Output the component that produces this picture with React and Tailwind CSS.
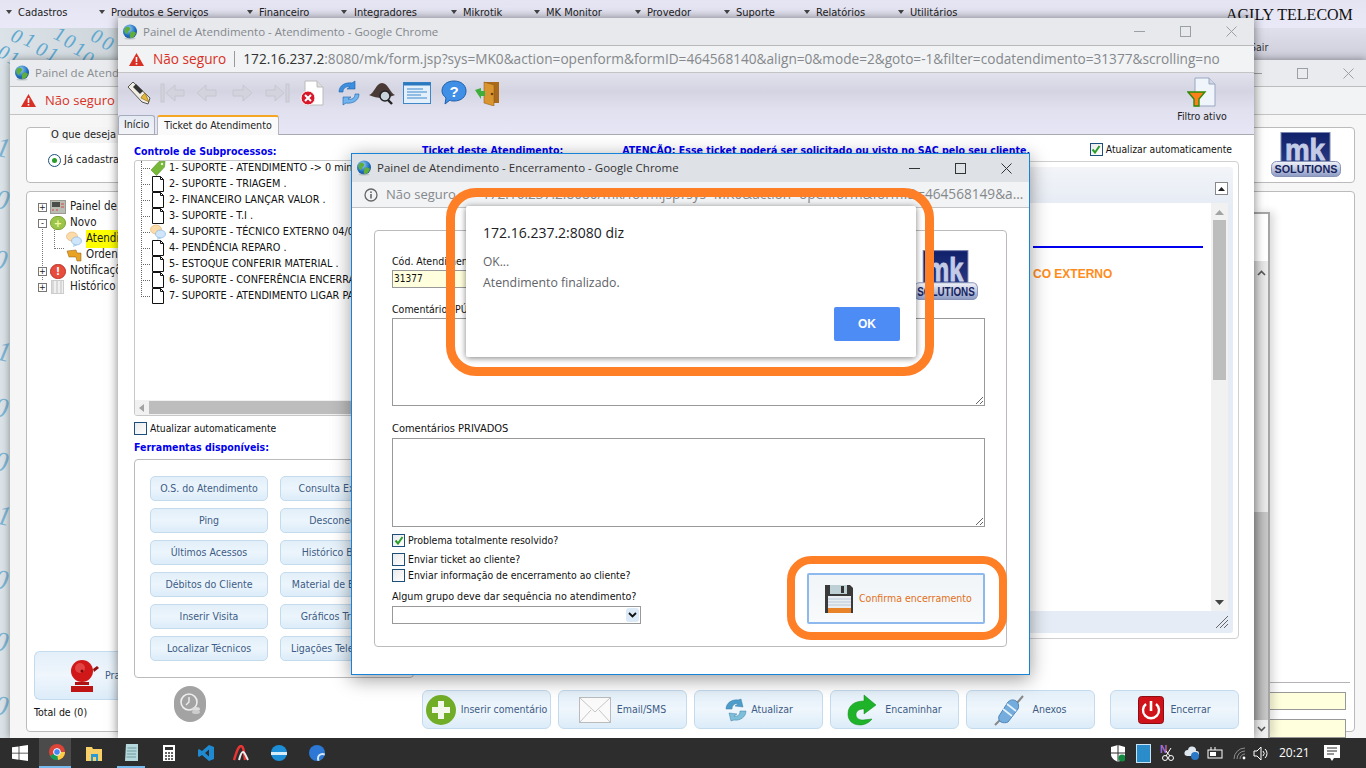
import React from 'react';

const menus = [
  ['Cadastros', 6, 18], ['Produtos e Serviços', 99, 111], ['Financeiro', 247, 259], ['Integradores', 341, 354],
  ['Mikrotik', 451, 463], ['MK Monitor', 534, 546], ['Provedor', 635, 647], ['Suporte', 724, 736], ['Relatórios', 804, 816], ['Utilitários', 898, 910],
];

const subprocessos = [
  ['tag', '1- SUPORTE - ATENDIMENTO -> 0 minutos'],
  ['doc', '2- SUPORTE - TRIAGEM .'],
  ['doc', '2- FINANCEIRO LANÇAR VALOR .'],
  ['doc', '3- SUPORTE - T.I .'],
  ['chat', '4- SUPORTE - TÉCNICO EXTERNO 04/05'],
  ['doc', '4- PENDÊNCIA REPARO .'],
  ['doc', '5- ESTOQUE CONFERIR MATERIAL .'],
  ['doc', '6- SUPORTE - CONFERÊNCIA ENCERRAMENTO'],
  ['doc', '7- SUPORTE - ATENDIMENTO LIGAR PARA'],
];

const ferramentas = [
  ['O.S. do Atendimento', 'Consulta Externa'],
  ['Ping', 'Desconectar'],
  ['Últimos Acessos', 'Histórico Banda'],
  ['Débitos do Cliente', 'Material de Estoque'],
  ['Inserir Visita', 'Gráficos Tráfego'],
  ['Localizar Técnicos', 'Ligações Telefônicas'],
];

function Globe({ size = 16 }) {
  return (
    <svg width={size} height={size} viewBox="0 0 16 16" className="shrink-0">
      <defs>
        <radialGradient id="gl" cx="0.4" cy="0.3" r="0.8">
          <stop offset="0" stopColor="#9fd4f7" />
          <stop offset="0.6" stopColor="#1f6fc0" />
          <stop offset="1" stopColor="#0f3f86" />
        </radialGradient>
      </defs>
      <circle cx="8" cy="7.5" r="7" fill="url(#gl)" />
      <path d="M3 4c2-2 4-1 5 0s-1 3-2 4-1 3-2 2-2-4-1-6zM9 8c2-1 4 0 5 1-1 3-3 5-5 5s-1-5 0-6z" fill="#5fae3a" />
      <ellipse cx="8" cy="14.6" rx="5.5" ry="1" fill="#9aa" opacity="0.5" />
    </svg>
  );
}

function Warn({ className = '' }) {
  return (
    <svg width="15" height="13" viewBox="0 0 15 13" className={`shrink-0 ${className}`}>
      <path d="M7.5 0L15 13H0z" fill="#d93025" />
      <rect x="6.7" y="4" width="1.6" height="5" fill="#fff" />
      <rect x="6.7" y="10" width="1.6" height="1.6" fill="#fff" />
    </svg>
  );
}

function WinControls({ color = '#9aa0a6', close = '#9aa0a6', className = 'pr-[17px]' }) {
  return (
    <div className={`flex items-center gap-[35px] ${className}`}>
      <svg width="11" height="11" viewBox="0 0 11 11"><path d="M0 5.500h11" stroke={color} /></svg>
      <svg width="11" height="11" viewBox="0 0 11 11"><rect x="0.5" y="0.5" width="10" height="10" fill="none" stroke={color} /></svg>
      <svg width="11" height="11" viewBox="0 0 11 11"><path d="M0.5 0.5l10 10M10.500 0.5l-10 10" stroke={close} /></svg>
    </div>
  );
}

function DocIcon() {
  return (
    <svg width="14" height="16" viewBox="0 0 14 16" className="shrink-0">
      <path d="M1.500 0.5h8l3 3v12h-11z" fill="#fff" stroke="#111" />
      <path d="M9.500 0.5v3h3" fill="none" stroke="#111" />
    </svg>
  );
}

function TagIcon() {
  return (
    <svg width="16" height="16" viewBox="0 0 16 16" className="shrink-0">
      <path d="M1 10L9 1.500l6-.5-.5 6L6.500 15.500z" fill="#77b83a" stroke="#5b9528" strokeWidth="0.6" />
      <circle cx="12" cy="4" r="1.200" fill="#e8f5d8" />
    </svg>
  );
}

function ChatIcon({ size = 16 }) {
  return (
    <svg width={size} height={size} viewBox="0 0 16 16" className="shrink-0">
      <ellipse cx="6" cy="5.500" rx="5.500" ry="4.500" fill="#fbdca8" stroke="#e0b070" strokeWidth="0.6" />
      <ellipse cx="10.500" cy="10" rx="5" ry="4" fill="#cfe6fa" stroke="#79aedb" strokeWidth="0.6" />
      <path d="M8 13l-0.5 2.500 3-1.500z" fill="#cfe6fa" stroke="#79aedb" strokeWidth="0.4" />
    </svg>
  );
}

function ToolArrow({ dir, bar, className = '' }) {
  return (
    <svg width="26" height="22" viewBox="0 0 26 22" className={`shrink-0 ${className}`}>
      <g transform={dir === 'right' ? 'translate(26,0) scale(-1,1)' : undefined} fill="#d2d3dc" stroke="#c3c4cd" strokeWidth="0.8">
        {bar && <rect x="1" y="2" width="3" height="18" />}
        <path d={bar ? 'M6 11L15 3v5h9v6h-9v5z' : 'M3 11L12 3v5h10v6H12v5z'} />
      </g>
    </svg>
  );
}

function Checkbox({ checked }) {
  return (
    <span className="w-[13px] h-[13px] shrink-0 border border-[#1c4f7c] bg-gradient-to-br from-[#eaeaea] to-white flex items-center justify-center">
      {checked && (
        <svg width="10" height="9" viewBox="0 0 10 9"><path d="M1.500 4.500L4 7.500 8.500 1" fill="none" stroke="#2a9d2a" strokeWidth="2" /></svg>
      )}
    </span>
  );
}

function ToolButton({ children, className = '' }) {
  return (
    <button className={`h-[25px] shrink-0 rounded-[5px] border border-[#c4dbee] bg-[linear-gradient(#e2eff9,#ecf5fc_50%,#dcecf9)] text-[10.5px] text-[#3d5c86] text-center whitespace-nowrap overflow-hidden ${className}`}>
      {children}
    </button>
  );
}

function ActionButton({ icon, label, className = '', gap = 'gap-[6px]' }) {
  return (
    <button className={`w-[129px] h-[39px] shrink-0 rounded-[6px] border border-[#c4dbee] bg-[linear-gradient(#e3eff9,#eff6fc_50%,#dcecf9)] flex items-center justify-center ${gap} text-[10.5px] text-[#3d5c86] whitespace-nowrap ${className}`}>
      {icon}
      <span>{label}</span>
    </button>
  );
}

function Logo({ className = '', width = 70, height = 45 }) {
  return (
    <svg width={width} height={height} viewBox="0 0 70 45" preserveAspectRatio="none" className={className}>
      <defs>
        <linearGradient id="lg1" x1="0" y1="0" x2="0" y2="1">
          <stop offset="0" stopColor="#10206a" />
          <stop offset="1" stopColor="#2a3d85" />
        </linearGradient>
        <linearGradient id="lg2" x1="0" y1="0" x2="0" y2="1">
          <stop offset="0" stopColor="#f3f4fa" />
          <stop offset="1" stopColor="#8b99c4" />
        </linearGradient>
      </defs>
      <rect x="10" y="0.5" width="49" height="33" fill="url(#lg1)" stroke="#7d86ae" />
      <text x="34" y="28" textAnchor="middle" fontFamily="'Liberation Sans',sans-serif" fontWeight="700" fontSize="30" fill="#c4cbe6" stroke="#c4cbe6" strokeWidth="0.9" textLength="40" lengthAdjust="spacingAndGlyphs">mk</text>
      <rect x="0.5" y="29.500" width="69" height="15" rx="5" fill="url(#lg2)" stroke="#8893b8" />
      <text x="35" y="41" textAnchor="middle" fontFamily="'Liberation Sans',sans-serif" fontWeight="700" fontSize="11" fill="#16245e" textLength="63" lengthAdjust="spacingAndGlyphs">SOLUTIONS</text>
    </svg>
  );
}

function Wallpaper() {
  // digitos da faixa de cima (centro x, y) e da coluna esquerda
  const top = [
    ['0', 17, 36], ['1', 30, 40], ['0', 42, 49], ['1', 53, 54],
    ['1', 60, 34], ['0', 70, 41], ['1', 80, 49], ['0', 88, 58],
    ['0', 97, 36], ['0', 108, 43],
    ['0', 4, 52], ['1', 14, 58],
  ];
  const column = [
    ['1', 3, 148], ['0', 2, 200], ['0', 0, 260], ['1', 4, 352], ['0', 1, 408], ['0', 1, 462],
    ['1', 4, 516], ['0', 1, 580], ['0', 1, 642], ['0', 1, 706],
  ];
  return (
    <div className="absolute left-0 top-[28px] w-[120px] h-[712px] overflow-hidden bg-[linear-gradient(90deg,#dbe3e8,#cdd5da)] font-['Liberation_Serif',serif] italic text-[#5fa8d0]">
      {top.map(([d, x, y], i) => (
        <span key={i} className="absolute rotate-[24deg] text-[20px] leading-none" style={{ left: x - 5, top: y - 38 }}>{d}</span>
      ))}
      {column.map(([d, x, y], i) => (
        <span key={i} className="absolute rotate-[12deg] text-[28px] leading-none text-[#7db4d4]" style={{ left: x - 7, top: y - 42 }}>{d}</span>
      ))}
    </div>
  );
}

function BackTree() {
  const plus = (
    <span className="w-[9px] h-[9px] border border-[#777] bg-white flex items-center justify-center text-[9px] leading-none shrink-0">+</span>
  );
  return (
    <div className="relative flex flex-col text-[11.5px] text-[#222]">
      <span className="absolute left-[4px] top-[20px] h-[61px] border-l border-dotted border-[#777]" />
      <span className="absolute left-[16px] top-[24px] h-[26px] w-[10px] border-l border-b border-dotted border-[#777]" />
      <div className="relative h-[16px] flex items-center gap-[3px]">{plus}
        <svg width="16" height="14" viewBox="0 0 16 14" className="shrink-0">
          <rect x="0.5" y="0.5" width="15" height="13" fill="#b9bcb2" stroke="#9a9a92" />
          <rect x="2" y="2" width="8" height="5" fill="#4a4d48" />
          <path d="M2 10h2M6 10h2M11 4h3M11 7h3" stroke="#d44" />
        </svg>
        <span className="ml-[1px] whitespace-nowrap">Painel de</span>
      </div>
      <div className="relative h-[16px] flex items-center gap-[3px]">
        <span className="w-[9px] h-[9px] border border-[#777] bg-white flex items-center justify-center text-[9px] leading-none shrink-0">-</span>
        <span className="w-[16px] h-[14px] rounded-full bg-[#9bc44a] border border-[#7da133] flex items-center justify-center text-[11px] font-bold text-[#f3f7a0] leading-none shrink-0">+</span>
        <span className="ml-[1px]">Novo</span>
      </div>
      <div className="relative h-[16px] flex items-center gap-[3px] pl-[28px]">
        <ChatIcon />
        <span className="bg-[#ffff00] ml-[1px] whitespace-nowrap">Atendi</span>
      </div>
      <div className="relative h-[16px] flex items-center gap-[4px] pl-[28px]">
        <svg width="16" height="16" viewBox="0 0 16 16" className="shrink-0"><path d="M1 4l9-1 1 3 4 0 0 8h-4l-1-4-7 0z" fill="#e8a224" stroke="#8a5a12" strokeWidth="0.5" /></svg>
        <span>Orden</span>
      </div>
      <div className="relative h-[16px] flex items-center gap-[3px]">{plus}
        <span className="w-[16px] h-[15px] rounded-full bg-[#e84c3d] border border-[#b93226] flex items-center justify-center text-[11px] font-bold text-white leading-none shrink-0">!</span>
        <span className="ml-[1px] whitespace-nowrap">Notificaçõ</span>
      </div>
      <div className="relative h-[16px] flex items-center gap-[3px]">{plus}
        <span className="w-[13px] h-[14px] ml-[1px] mr-[2px] bg-[repeating-linear-gradient(90deg,#d8d8d8_0_2px,#f0f0f0_2px_4px)] border border-[#ccc] shrink-0" />
        <span className="ml-[1px]">Histórico</span>
      </div>
    </div>
  );
}

function BackWindow() {
  return (
    <section className="absolute left-[10px] top-[60px] w-[1356px] h-[678px] flex flex-col bg-[#f6f6f6] shadow-[0_0_8px_rgba(0,0,0,0.4)]">
      <div className="h-[27px] shrink-0 bg-[#e9ebee] border-b border-[#bdbdbd] flex items-center justify-between pl-[2px]">
        <div className="flex items-center gap-[5px] pl-[2px] text-[11.5px] text-[#8a8d91] font-['Open_Sans',sans-serif]">
          <Globe />
          <span>Painel de Atendimento</span>
        </div>
        <WinControls className="pr-[12px]" />
      </div>
      <div className="h-[28px] shrink-0 bg-[#f1f3f4] border-b border-[#c4c4c4] flex items-center pl-[11px] gap-[9px] text-[13.5px] text-[#d93025]">
        <Warn />
        <span className="font-['Open_Sans',sans-serif] text-[13px]">Não seguro</span>
      </div>
      <div className="flex-1 flex flex-col pl-[16px] pr-[11px] pt-[12px] pb-[6px] gap-[8px] min-h-0">
        <div className="h-[56px] shrink-0 rounded-[4px] border border-[#bdbabd] bg-white relative flex items-center justify-between pl-[21px] pr-[13px]">
          <span className="absolute left-[23px] -top-[1px] h-[16px] px-[1px] bg-[#f4f4f4] text-[11px] text-[#222] leading-[16px]">O que deseja fazer</span>
          <div className="flex items-center gap-[3px] pt-[10px] text-[11px] text-[#222]">
            <span className="w-[13px] h-[13px] rounded-full border border-[#1c4f7c] bg-white flex items-center justify-center">
              <span className="w-[5px] h-[5px] rounded-full bg-[#2a9d2a]" />
            </span>
            <span>Já cadastrado</span>
          </div>
          <Logo className="mt-[-2px]" />
        </div>
        <div className="flex-1 min-h-0 rounded-[4px] border border-[#bdbabd] bg-white flex">
          <div className="w-[92px] flex flex-col pl-[11px] pt-[7px] text-[11px] text-[#222]">
            <BackTree />
            <div className="mt-auto pb-[12px] flex flex-col ml-[-4px]">
              <div className="h-[49px] rounded-l-[6px] border border-r-0 border-[#c4dbee] bg-[linear-gradient(#e3eff9,#eff6fc_50%,#dcecf9)] flex items-center justify-end gap-[6px] text-[#3d5c86]">
                <svg width="30" height="34" viewBox="0 0 30 34" className="shrink-0">
                  <circle cx="13" cy="12" r="11" fill="#d01818" />
                  <circle cx="11" cy="9" r="5" fill="#f06060" opacity="0.6" />
                  <circle cx="13" cy="12" r="1.500" fill="#7a0808" />
                  <rect x="6" y="23" width="14" height="3" fill="#b01212" />
                  <rect x="2" y="27" width="22" height="6" fill="#c01414" />
                  <path d="M24 10l4-3 2 2-5 4z" fill="#901010" />
                </svg>
                <span className="w-[14px] overflow-hidden text-[10.5px]">Pra</span>
              </div>
              <span className="mt-[5px] h-[14px] leading-[14px] text-[10.5px] text-[#111]">Total de (0)</span>
            </div>
          </div>
          <div className="flex-1" />
          <div className="w-[86px] flex flex-col">
            <div className="flex-1" />
            <div className="border-t border-[#b7b2b7] pt-[9px] pr-[4px] flex flex-col gap-[9px] mr-[4px] h-[49px]">
              <div className="h-[18px] shrink-0 border border-[#999] bg-[#ffffdd]" />
              <div className="h-[19px] shrink-0 border border-[#999] bg-[#ffffdd]" />
            </div>
          </div>
        </div>
      </div>
      {/* coluna de rolagem da janela de trás */}
      <div className="absolute left-[1244px] top-[152px] w-[16px] h-[526px] border-r-2 border-[#a5a5a5] border-t-2 flex flex-col bg-white shadow-[4px_0_8px_rgba(0,0,0,0.15)]">
        <div className="h-[47px] shrink-0 bg-white" />
        <div className="flex-1 min-h-0 bg-[linear-gradient(90deg,#d4d4d4,#ececec)] flex flex-col items-center">
          <svg width="9" height="6" viewBox="0 0 9 6" className="mt-[9px]"><path d="M1 5l3.500-3.500L8 5" fill="none" stroke="#555" strokeWidth="1.6" /></svg>
          <span className="mt-auto w-full h-[208px] bg-[linear-gradient(90deg,#ababab,#c9c9c9)]" />
          <span className="w-full h-[18px] bg-[#efefef] flex items-center justify-center">
            <svg width="9" height="6" viewBox="0 0 9 6"><path d="M1 1l3.500 3.500L8 1" fill="none" stroke="#555" strokeWidth="1.6" /></svg>
          </span>
        </div>
      </div>
    </section>
  );
}

function MainToolbar() {
  return (
    <div className="h-[62px] shrink-0 relative bg-[linear-gradient(#e2e2ee,#d4d4e2_30%,#e0e0ef_60%,#e6e6f6)] border-b border-[#a9a9b1]">
      <div className="flex items-center pl-[9px] pt-[7px]">
        <svg width="24" height="24" viewBox="0 0 24 24" className="shrink-0">
          <path d="M1 6l5-5 17 16-2 6-6-2z" fill="#f1efe4" stroke="#555" />
          <path d="M6 6l3-3 7 7-3 3z" fill="#333" />
          <path d="M15 15l3-3 4 9-8-4z" fill="#e5b73a" stroke="#7a5a10" strokeWidth="0.6" />
        </svg>
        <ToolArrow dir="left" bar className="ml-[9px]" />
        <ToolArrow dir="left" className="ml-[8px]" />
        <ToolArrow dir="right" className="ml-[9px]" />
        <ToolArrow dir="right" bar className="ml-[9px]" />
        <svg width="24" height="26" viewBox="0 0 24 26" className="shrink-0 ml-[10px]">
          <path d="M5 1h12l6 6v18H5z" fill="#fff" stroke="#bbb" />
          <path d="M17 1v6h6" fill="#ddd" stroke="#bbb" />
          <circle cx="8" cy="18" r="7" fill="#d8182a" stroke="#fff" />
          <path d="M5 15l6 6M11 15l-6 6" stroke="#fff" strokeWidth="2" />
        </svg>
        <svg width="26" height="26" viewBox="0 0 26 26" className="shrink-0 ml-[12px]">
          <path d="M3 12C3 5 10 2 16 3l3-2v8h-8l3-2c-4-1-7 1-7 5z" fill="#3a8fe0" stroke="#1b5fa8" strokeWidth="0.6" />
          <path d="M23 14c0 7-7 10-13 9l-3 2v-8h8l-3 2c4 1 7-1 7-5z" fill="#6fb4ef" stroke="#1b5fa8" strokeWidth="0.6" />
        </svg>
        <svg width="28" height="24" viewBox="0 0 28 24" className="shrink-0 ml-[6px]">
          <path d="M1 14C6 13 8 2 14 2s8 10 13 12c-5 2-9 3-13 3s-9-1-13-3z" fill="#4a3a36" />
          <circle cx="17" cy="15" r="5" fill="#c9d4dc" stroke="#222" strokeWidth="1.500" />
          <path d="M20 19l4 4" stroke="#222" strokeWidth="2.400" />
        </svg>
        <svg width="28" height="24" viewBox="0 0 28 24" className="shrink-0 ml-[7px]">
          <rect x="0.5" y="1.500" width="27" height="21" fill="#e3f0fb" stroke="#3d87c9" />
          <rect x="0.5" y="1.500" width="27" height="3" fill="#2a78c0" />
          <path d="M4 8h16M4 11h20M4 14h14M4 17h20" stroke="#3d87c9" />
        </svg>
        <svg width="26" height="26" viewBox="0 0 26 26" className="shrink-0 ml-[10px]">
          <path d="M13 1c7 0 12 4 12 10s-5 10-12 10c-2 0-3 0-4-1l-5 4 1-6C3 16 1 14 1 11 1 5 6 1 13 1z" fill="#3f8fe6" stroke="#1f5fab" />
          <text x="13" y="17" textAnchor="middle" fontFamily="'Liberation Sans',sans-serif" fontWeight="700" fontSize="15" fill="#fff">?</text>
        </svg>
        <svg width="26" height="26" viewBox="0 0 26 26" className="shrink-0 ml-[7px]">
          <path d="M10 2h15v21H10z" fill="#a96a1c" />
          <path d="M10 2l10 3v21l-10-3z" fill="#d9952f" stroke="#8b5512" strokeWidth="0.5" />
          <circle cx="18" cy="14" r="1.300" fill="#6a400c" />
          <path d="M1 10l6-2 0 3 4 0v5H7v3z" fill="#3fae3a" />
        </svg>
      </div>
      <div className="absolute left-0 bottom-0 flex items-end gap-[2px] text-[10.6px] text-[#222]">
        <div className="h-[19px] px-[5px] rounded-t-[3px] border border-b-0 border-[#a3adbd] bg-[linear-gradient(#e5eaf3,#f3f3f7)] flex items-center">Início</div>
        <div className="h-[20px] px-[6px] rounded-t-[3px] border-x border-[#b7b7bd] border-t-2 border-t-[#f5a623] bg-[#fafafa] flex items-center mb-[-1px]">Ticket do Atendimento</div>
      </div>
      <div className="absolute right-[26px] top-[4px] w-[52px] flex flex-col items-center text-[10.5px] text-[#222]">
        <svg width="30" height="30" viewBox="0 0 30 30">
          <path d="M8 1h14l6 6v22H8z" fill="#f0f4fb" stroke="#9aa7c0" />
          <path d="M22 1v6h6" fill="#cfd6e4" stroke="#9aa7c0" />
          <path d="M1 15h17l-6 7v7h-5v-7z" fill="#ff7f1a" stroke="#2d8a0a" strokeWidth="1.400" />
        </svg>
        <span className="mt-[2px] whitespace-nowrap">Filtro ativo</span>
      </div>
    </div>
  );
}

function MainWindow() {
  return (
    <section className="absolute left-[118px] top-[18px] w-[1136px] h-[720px] flex flex-col bg-white shadow-[0_0_10px_rgba(0,0,0,0.5)]">
      <div className="h-[28px] shrink-0 bg-[#e7e9ec] border-b border-[#b9b9b9] flex items-center justify-between pl-[4px]">
        <div className="flex items-center gap-[5px] text-[11.5px] text-[#85888c] font-['Open_Sans',sans-serif]">
          <Globe />
          <span>Painel de Atendimento - Atendimento - Google Chrome</span>
        </div>
        <WinControls />
      </div>
      <div className="h-[27px] shrink-0 bg-[#f1f3f4] border-b border-[#c4c4c4] flex items-center pl-[11px] font-['Open_Sans',sans-serif] text-[13.65px] whitespace-nowrap overflow-hidden">
        <Warn />
        <span className="ml-[9px] text-[#d93025]">Não seguro</span>
        <span className="mx-[8px] w-px h-[16px] bg-[#999]" />
        <span className="text-[#333]">172.16.237.2</span>
        <span className="text-[#85888c]">:8080/mk/form.jsp?sys=MK0&amp;action=openform&amp;formID=464568140&amp;align=0&amp;mode=2&amp;goto=-1&amp;filter=codatendimento=31377&amp;scrolling=no</span>
      </div>
      <MainToolbar />
      <div className="flex-1 min-h-0 flex flex-col bg-white">
        <div className="h-[542px] shrink-0 flex pl-[16px] pr-[15px]">
          <div className="w-[280px] shrink-0 flex flex-col">
            <h3 className="mt-[9px] h-[14px] leading-[14px] text-[10.5px] font-bold text-[#0000ee]">Controle de Subprocessos:</h3>
            <div className="mt-[2px] h-[256px] shrink-0 border border-[#c8c8c8] rounded-l-[3px] flex flex-col relative overflow-hidden">
              <div className="flex-1 -mt-[1px] text-[10.8px] text-[#111]">
                <span className="absolute left-[6px] top-0 h-[134px] border-l border-dotted border-[#666]" />
                {subprocessos.map(([icon, label]) => (
                  <div key={label} className="h-[16px] flex items-center pl-[6px] whitespace-nowrap">
                    <span className="w-[9px] border-t border-dotted border-[#666] shrink-0" />
                    <span className="w-[16px] flex justify-center shrink-0">
                      {icon === 'tag' && <TagIcon />}
                      {icon === 'doc' && <DocIcon />}
                      {icon === 'chat' && <ChatIcon />}
                    </span>
                    <span className="ml-[3px]">{label}</span>
                  </div>
                ))}
              </div>
              <div className="h-[15px] shrink-0 bg-[#f1f1f1] flex items-center pl-[4px] gap-[5px]">
                <svg width="5" height="8" viewBox="0 0 5 8"><path d="M5 0v8L0 4z" fill="#a3a3a3" /></svg>
                <span className="flex-1 h-[13px] bg-[#bdbdbd]" />
              </div>
            </div>
            <label className="mt-[6px] h-[13px] flex items-center gap-[3px] text-[10.3px] text-[#111]">
              <Checkbox />
              <span>Atualizar automaticamente</span>
            </label>
            <h3 className="mt-[5px] h-[14px] leading-[14px] text-[10.5px] font-bold text-[#0000ee]">Ferramentas disponíveis:</h3>
            <div className="mt-[5px] h-[219px] shrink-0 rounded-[4px] border border-[#bdbabd] pt-[16px] pl-[15px] flex flex-col gap-[7px]">
              {ferramentas.map(([a, b]) => (
                <div key={a} className="flex gap-[12px]">
                  <ToolButton className="w-[118px]">{a}</ToolButton>
                  <ToolButton className="w-[118px]">{b}</ToolButton>
                </div>
              ))}
            </div>
          </div>
          <div className="flex-1 min-w-0 pl-[8px] flex flex-col">
            <div className="mt-[9px] h-[14px] flex items-center text-[10.5px] font-bold text-[#0000ee] whitespace-nowrap">
              <span className="underline">Ticket deste Atendimento:</span>
              <span className="ml-[59px] underline">ATENÇÃO: Esse ticket poderá ser solicitado ou visto no SAC pelo seu cliente.</span>
              <label className="ml-auto -mt-[3px] mr-[7px] flex items-center gap-[3px] text-[10.3px] font-normal text-[#111]">
                <Checkbox checked />
                <span>Atualizar automaticamente</span>
              </label>
            </div>
            <div className="mt-[3px] h-[478px] rounded-[4px] border border-[#d0d0d0] p-[5px] flex flex-col">
              <div className="flex-1 min-h-0 rounded-[3px] bg-[linear-gradient(#f2f4f8,#e6ecf5_40px)] flex flex-col pl-[5px] pr-[5px]">
                <div className="h-[36px] shrink-0 flex items-end justify-end pb-[8px]">
                  <span className="w-[13px] h-[13px] mr-[0px] border border-[#888] bg-white flex items-center justify-center">
                    <svg width="7" height="4" viewBox="0 0 7 4"><path d="M0 4l3.500-4L7 4z" fill="#222" /></svg>
                  </span>
                </div>
                <div className="flex-1 min-h-0 bg-white flex">
                  <div className="flex-1 flex flex-col pt-[43px] pl-[600px] pr-[8px]">
                    <span className="h-[2px] bg-[#0000ee]" />
                    <span className="mt-[17px] text-[12px] font-bold text-[#ff8c1a] font-['Liberation_Sans',sans-serif] whitespace-nowrap">CO EXTERNO</span>
                  </div>
                  <div className="w-[17px] shrink-0 bg-[#f1f1f1] flex flex-col items-center">
                    <svg width="9" height="5" viewBox="0 0 9 5" className="mt-[7px] mb-[5px]"><path d="M0 5l4.500-5L9 5z" fill="#a3a3a3" /></svg>
                    <span className="w-[13px] h-[160px] bg-[#bdbdbd]" />
                    <svg width="9" height="5" viewBox="0 0 9 5" className="mt-auto mb-[6px]"><path d="M0 0l4.500 5L9 0z" fill="#444" /></svg>
                  </div>
                </div>
                <div className="h-[22px] shrink-0 flex items-center justify-end">
                  <svg width="12" height="12" viewBox="0 0 12 12"><path d="M12 0L0 12M12 4l-8 8M12 8l-4 4" stroke="#666" /></svg>
                </div>
              </div>
            </div>
          </div>
        </div>
        <div className="mt-[13px] h-[39px] shrink-0 flex items-center">
          <span className="ml-[56px] -mt-[12px] w-[32px] h-[36px] rounded-full bg-[#a3a3a3] flex items-center justify-center">
            <svg width="22" height="24" viewBox="0 0 22 24">
              <circle cx="10" cy="10" r="8" fill="none" stroke="#eee" strokeWidth="1.600" />
              <path d="M10 5v5l-3 3" fill="none" stroke="#eee" strokeWidth="1.400" />
              <ellipse cx="17" cy="17" rx="4" ry="2" fill="#ddd" />
              <ellipse cx="17" cy="20" rx="4" ry="2" fill="#ccc" />
            </svg>
          </span>
          <div className="ml-[216px] flex gap-[7px]">
            <ActionButton
              label="Inserir comentário"
              gap="gap-[5px]"
              icon={
                <svg width="30" height="30" viewBox="0 0 30 30">
                  <circle cx="15" cy="15" r="15" fill="#72ad27" />
                  <path d="M12 6h6v6h6v6h-6v6h-6v-6H6v-6h6z" fill="#f4f8ec" />
                </svg>
              }
            />
            <ActionButton
              label="Email/SMS"
              gap="gap-[6px]"
              icon={
                <svg width="32" height="26" viewBox="0 0 32 26">
                  <rect x="0.5" y="0.5" width="31" height="25" fill="#fafafa" stroke="#bbb" />
                  <path d="M1 1l15 14L31 1M1 25l11-12M31 25L20 13" fill="none" stroke="#c6c6c6" />
                </svg>
              }
            />
            <ActionButton
              label="Atualizar"
              gap="gap-[3px]"
              icon={
                <svg width="24" height="24" viewBox="0 0 24 24">
                  <path d="M2 11C2 5 8 1 14 2l3-1 2 8-8-1 3-2c-3-1-6 1-6 5z" fill="#4e9cc9" stroke="#3d7fa7" strokeWidth="0.5" />
                  <path d="M22 13c0 6-6 10-12 9l-3 1-2-8 8 1-3 2c3 1 6-1 6-5z" fill="#7dbfd8" stroke="#3d7fa7" strokeWidth="0.5" />
                </svg>
              }
            />
            <ActionButton
              label="Encaminhar"
              gap="gap-[8px]"
              icon={
                <svg width="30" height="32" viewBox="0 0 30 32">
                  <path d="M17 1l12 10-12 9v-5c-5 0-8 2-8 6 0 3 3 5 7 5l9-1c-3 4-8 6-12 6C6 31 1 27 1 20 1 11 8 7 17 7z" fill="#1fb32a" stroke="#0d8a17" strokeWidth="0.5" />
                </svg>
              }
            />
            <ActionButton
              label="Anexos"
              gap="gap-[8px]"
              icon={
                <svg width="30" height="32" viewBox="0 0 30 32">
                  <path d="M1 31l6-6M23 9l6-7" stroke="#888" strokeWidth="2" />
                  <path d="M5 22L14 8c2-2 5-3 8-1s3 6 2 8l-10 13c-2 1-5 1-7 0s-3-4-2-6z" fill="#74addd" stroke="#4f85b8" />
                  <path d="M9 15l9 7M13 10l9 7" stroke="#e6f2fc" strokeWidth="1.600" />
                </svg>
              }
            />
            <ActionButton
              label="Encerrar"
              gap="gap-[6px]"
              className="ml-[8px]"
              icon={
                <svg width="26" height="28" viewBox="0 0 26 28">
                  <rect x="0.5" y="0.5" width="25" height="27" rx="3" fill="#d0131b" stroke="#8e0d12" />
                  <path d="M8 8a8 8 0 1 0 10 0" fill="none" stroke="#fff" strokeWidth="2.400" />
                  <path d="M13 5v10" stroke="#fff" strokeWidth="2.600" />
                </svg>
              }
            />
          </div>
        </div>
      </div>
    </section>
  );
}

function DialogEncerramento() {
  return (
    <section className="absolute left-[351px] top-[153px] w-[679px] h-[522px] border border-[#1783d8] flex flex-col bg-white shadow-[0_4px_18px_rgba(0,0,0,0.4)]">
      <div className="h-[28px] shrink-0 bg-[#dee1e6] flex items-center justify-between pl-[4px] font-['Open_Sans',sans-serif] text-[11.5px] text-[#333]">
        <div className="flex items-center gap-[5px]">
          <Globe />
          <span>Painel de Atendimento - Encerramento - Google Chrome</span>
        </div>
        <WinControls color="#333" close="#333" />
      </div>
      <div className="h-[26px] shrink-0 bg-[#f1f3f4] border-b border-[#c4c4c4] flex items-center pl-[12px] gap-[8px] font-['Open_Sans',sans-serif] text-[13px] text-[#85888c] whitespace-nowrap overflow-hidden">
        <svg width="14" height="14" viewBox="0 0 14 14" className="shrink-0">
          <circle cx="7" cy="7" r="6" fill="none" stroke="#666" strokeWidth="1.300" />
          <rect x="6.200" y="6" width="1.600" height="4.500" fill="#666" />
          <rect x="6.200" y="3.400" width="1.600" height="1.600" fill="#666" />
        </svg>
        <span>Não seguro</span>
        <span className="ml-[18px] text-[13.65px]">172.16.237.2:8080/mk/form.jsp?sys=MK0&amp;action=openform&amp;formID=464568149&amp;a...</span>
      </div>
      <div className="mx-[22px] mt-[22px] h-[417px] rounded-[4px] border border-[#bdbabd] px-[17px] pt-[23px] relative text-[10.5px] text-[#111]">
        <Logo className="absolute right-[28px] top-[19px]" width={64} height={50} />
        <p className="h-[14px] leading-[14px]">Cód. Atendimento</p>
        <div className="mt-[2px] w-[200px] h-[18px] border border-[#999] bg-[#ffffdd] px-[1px] leading-[16px] text-[10px]">31377</div>
        <p className="mt-[14px] h-[14px] leading-[14px]">Comentários PÚBLICOS</p>
        <textarea readOnly className="mt-[2px] block w-[593px] h-[88px] border border-[#999]" />
        <p className="mt-[16px] h-[14px] leading-[14px] text-[11px]">Comentários PRIVADOS</p>
        <textarea readOnly className="mt-[2px] block w-[593px] h-[89px] border border-[#999]" />
        <div className="mt-[7px] flex justify-between w-[593px]">
          <div className="flex flex-col w-[249px]">
            <label className="h-[13px] flex items-center gap-[3px]"><Checkbox checked /><span>Problema totalmente resolvido?</span></label>
            <label className="mt-[6px] h-[13px] flex items-center gap-[3px] text-[10.4px]"><Checkbox /><span>Enviar ticket ao cliente?</span></label>
            <label className="mt-[3px] h-[13px] flex items-center gap-[3px] text-[10.4px]"><Checkbox /><span>Enviar informação de encerramento ao cliente?</span></label>
            <p className="mt-[8px] h-[14px] leading-[14px] whitespace-nowrap text-[10.7px]">Algum grupo deve dar sequência no atendimento?</p>
            <div className="mt-[2px] h-[18px] border border-[#999] flex items-center justify-end pr-[1px]">
              <span className="w-[13px] h-[14px] rounded-[3px] bg-[#dceaf7] flex items-center justify-center">
                <svg width="9" height="6" viewBox="0 0 9 6"><path d="M1 1l3.500 3.500L8 1" fill="none" stroke="#111" strokeWidth="1.800" /></svg>
              </span>
            </div>
          </div>
          <button className="self-end w-[178px] h-[51px] rounded-[2px] border-2 border-[#8db9ef] bg-[linear-gradient(#f1f5f8,#f8fafb)] flex items-center pl-[15px] gap-[5px] text-[10.5px] text-[#e2701a] whitespace-nowrap">
            <svg width="30" height="30" viewBox="0 0 30 30" className="shrink-0">
              <path d="M1 1h25l3 3v25H1z" fill="#3a3a3a" />
              <rect x="6" y="1" width="17" height="9" fill="#bcd0d6" />
              <rect x="17" y="2" width="3" height="7" fill="#333" />
              <rect x="4" y="12" width="23" height="12" fill="#e8eef2" />
              <path d="M4 15h23M4 18h23M4 21h23" stroke="#b9c8d8" />
              <rect x="4" y="24" width="23" height="5" fill="#e8832a" />
            </svg>
            <span>Confirma encerramento</span>
          </button>
        </div>
        {/* destaque laranja sobre o botao */}
        <span className="absolute left-[412px] top-[325px] w-[220px] h-[84px] rounded-[24px] border-[8px] border-[#ff7f27]" />
      </div>
      <div className="absolute left-[94px] top-[34px] w-[488px] h-[188px] rounded-[30px] border-[9px] border-[#ff7f27]" />
      <div className="absolute left-[114px] top-[52px] w-[450px] h-[151px] rounded-[2px] bg-white shadow-[0_1px_6px_rgba(0,0,0,0.5)] flex flex-col pl-[17px] pr-[16px] font-['Open_Sans',sans-serif]">
        <p className="mt-[18px] h-[18px] leading-[18px] text-[14px] text-[#202124]">172.16.237.2:8080 diz</p>
        <p className="mt-[12px] h-[16px] leading-[16px] text-[12px] text-[#5f6368]">OK...</p>
        <p className="mt-[5px] h-[16px] leading-[16px] text-[12.3px] text-[#5f6368]">Atendimento finalizado.</p>
        <div className="mt-[16px] flex justify-end">
          <button className="w-[66px] h-[34px] rounded-[2px] bg-[#4d8cf5] text-white text-[12px] font-bold font-['Liberation_Sans',sans-serif]">OK</button>
        </div>
      </div>
    </section>
  );
}

function Taskbar() {
  return (
    <footer className="absolute left-0 bottom-0 w-full h-[30px] bg-[#2d2d2d] flex items-center text-white">
      <span className="w-[39px] flex justify-center">
        <svg width="16" height="16" viewBox="0 0 16 16" fill="#fff">
          <path d="M0 2.300l6.600-.9v6.300H0zM7.400 1.300L16 0v7.700H7.400zM0 8.400h6.600v6.300L0 13.800zM7.400 8.400H16V16l-8.600-1.300z" />
        </svg>
      </span>
      <span className="w-[32px] h-[30px] pl-[3px] bg-[#4b4b4b] border-b-2 border-[#76b9ed] flex items-center justify-center">
        <svg width="16" height="16" viewBox="0 0 16 16">
          <circle cx="8" cy="8" r="8" fill="#db4437" />
          <path d="M8 8L1 12a8 8 0 0 0 8 4z" fill="#0f9d58" />
          <path d="M8 8h8a8 8 0 0 1-7 8z" fill="#ffcd40" />
          <circle cx="8" cy="8" r="3.400" fill="#4285f4" stroke="#fff" />
        </svg>
      </span>
      <span className="w-[46px] flex justify-center">
        <svg width="16" height="15" viewBox="0 0 16 15">
          <path d="M0 1h6l1 2h9v12H0z" fill="#f8d06a" />
          <rect x="5" y="8" width="7" height="7" fill="#2a9ad6" />
          <rect x="7" y="11" width="3" height="4" fill="#f8d06a" />
        </svg>
      </span>
      <span className="w-[28px] h-[30px] border-b-2 border-[#76b9ed] flex items-center justify-center">
        <svg width="15" height="18" viewBox="0 0 15 18">
          <path d="M2 1h12v17H1z" fill="#b5d8dc" />
          <path d="M3.500 5h9M3 8h9.500M3 11h9M2.500 14h9.500" stroke="#6f9aa0" />
        </svg>
      </span>
      <span className="w-[47px] flex justify-center">
        <svg width="12" height="16" viewBox="0 0 12 16">
          <rect width="12" height="16" fill="#fff" />
          <rect x="2" y="2" width="8" height="3" fill="#333" />
          <path d="M2 8h2M5 8h2M8 8h2M2 11h2M5 11h2M8 11h2M2 14h2M5 14h2M8 14h2" stroke="#333" strokeWidth="1.400" />
        </svg>
      </span>
      <span className="w-[28px] flex justify-center">
        <svg width="16" height="16" viewBox="0 0 16 16">
          <path d="M11 0l5 2v12l-5 2-7-6-3 2-1-1V5l1-1 3 2zM11 4.500L7 8l4 3.500z" fill="#1f8ad2" />
        </svg>
      </span>
      <span className="w-[44px] flex justify-center">
        <svg width="18" height="16" viewBox="0 0 18 16">
          <path d="M1 15C3 9 5 1 8 1c3 0 3 8 4 14" fill="none" stroke="#e33" strokeWidth="2.400" />
          <path d="M6 15c1-3 2-8 4-8s3 5 5 8" fill="none" stroke="#eee" strokeWidth="2" />
        </svg>
      </span>
      <span className="w-[30px] flex justify-center">
        <span className="w-[16px] h-[16px] rounded-full bg-[#1d8fd8] flex items-center justify-center">
          <span className="w-full h-[3px] bg-[#d5eefc]" />
        </span>
      </span>
      <span className="w-[45px] flex justify-center">
        <span className="w-[16px] h-[16px] rounded-full bg-[#2c78d4] flex items-end justify-end overflow-hidden">
          <span className="w-[11px] h-[11px] rounded-full border-[2px] border-[#d5e8fa] mb-[-3px] mr-[-3px]" />
        </span>
      </span>
      <div className="ml-auto flex items-center pr-[26px]">
        <svg width="14" height="17" viewBox="0 0 14 17" className="mr-[11px]">
          <path d="M0 2L7 0l7 2v7c0 4-3 6-7 8-4-2-7-4-7-8z" fill="#fff" />
          <path d="M7 0v17M0 8h14" stroke="#2d2d2d" />
          <circle cx="11" cy="13" r="3.600" fill="#0f8a3f" />
        </svg>
        <span className="w-[15px] h-[19px] mr-[9px] bg-[#2a8cc9] border border-[#c8e3f4]" />
        <svg width="16" height="18" viewBox="0 0 16 18" className="mr-[8px]">
          <text x="0" y="9" fontFamily="'Liberation Sans',sans-serif" fontWeight="700" fontSize="10" fill="#b06fd0">N</text>
          <circle cx="5" cy="14" r="2.500" fill="none" stroke="#fff" />
          <circle cx="11" cy="14" r="2.500" fill="none" stroke="#fff" />
          <path d="M6 12l5-8M10 12L6 7" stroke="#fff" />
        </svg>
        <svg width="16" height="14" viewBox="0 0 16 14" className="mr-[7px]">
          <path d="M3 10a3 3 0 0 1 1-6 4 4 0 0 1 8 1 2.500 2.500 0 0 1 1 5z" fill="#dfe7ee" />
          <circle cx="11" cy="10" r="4" fill="#2a78c8" />
        </svg>
        <svg width="16" height="12" viewBox="0 0 16 12" className="mr-[10px]">
          <path d="M4 0v3M8 0v3" stroke="#fff" />
          <rect x="1" y="3" width="14" height="8" fill="none" stroke="#fff" />
          <rect x="3" y="5" width="6" height="4" fill="#fff" />
        </svg>
        <svg width="13" height="13" viewBox="0 0 13 13" className="mr-[7px]">
          <path d="M1 12a11 11 0 0 1 11-11M4 12a8 8 0 0 1 8-8M7 12a5 5 0 0 1 5-5" fill="none" stroke="#8d8d8d" />
          <circle cx="11" cy="11" r="1.400" fill="#fff" />
        </svg>
        <svg width="15" height="15" viewBox="0 0 15 15" className="mr-[11px]">
          <path d="M1 5h3l4-4v13l-4-4H1z" fill="none" stroke="#fff" />
          <path d="M10 5a3.500 3.500 0 0 1 0 5M12 3a6 6 0 0 1 0 9" fill="none" stroke="#fff" />
        </svg>
        <span className="w-[27px] text-[12px] text-white font-['Open_Sans',sans-serif]">20:21</span>
        <svg width="16" height="17" viewBox="0 0 16 17" className="ml-[18px]">
          <path d="M0 0h16v13H10l-2 3-2-3H0z" fill="#fff" />
          <path d="M3 3h10M3 6h10M3 9h7" stroke="#2d2d2d" />
        </svg>
      </div>
    </footer>
  );
}

export default function App() {
  return (
    <div className="relative w-[1366px] h-[768px] overflow-hidden bg-[#e6e6f5] font-['DejaVu_Sans_Condensed','Liberation_Sans',sans-serif]">
      {/* menu principal */}
      <nav className="relative h-[28px] bg-[linear-gradient(#e4e4f2,#e9e9f8)] text-[11px] text-[#222]">
        {menus.map(([label, arrow, left]) => (
          <span key={label}>
            <svg width="6" height="4" viewBox="0 0 6 4" className="absolute top-[10px]" style={{ left: arrow }}><path d="M0 0h6L3 4z" fill="#444" /></svg>
            <span className="absolute top-[5px] whitespace-nowrap" style={{ left }}>{label}</span>
          </span>
        ))}
        <span className="absolute left-[1226px] top-[3px] font-['Liberation_Serif',serif] text-[16px] text-[#111]">AGILY TELECOM</span>
      </nav>
      <div className="absolute left-[1250px] top-[28px] w-[116px] h-[32px] bg-[linear-gradient(#e0e0ec,#cdcdda)] pt-[12px] text-[10.5px] text-[#333]">Sair</div>
      <Wallpaper />
      <BackWindow />
      <MainWindow />
      <DialogEncerramento />
      <Taskbar />
    </div>
  );
}
